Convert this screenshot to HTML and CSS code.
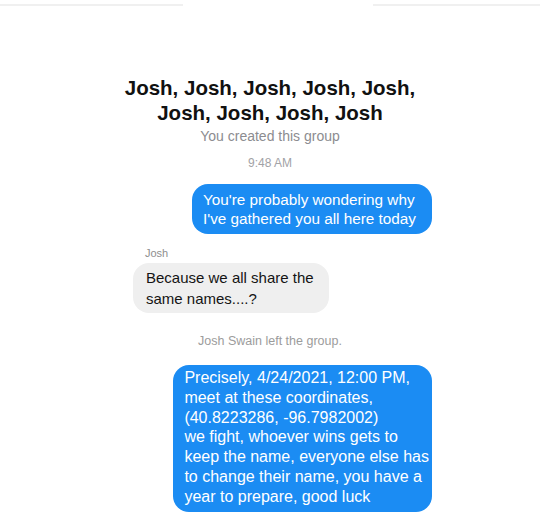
FILE: index.html
```html
<!DOCTYPE html>
<html>
<head>
<meta charset="utf-8">
<link rel="stylesheet" href="styles.css">
</head>
<body>
<div class="screen">
  <div class="topbar"><span class="rule left"></span><span class="gap"></span><span class="rule"></span></div>
  <h1 class="title">Josh, Josh, Josh, Josh, Josh,<br>Josh, Josh, Josh, Josh</h1>
  <div class="sub">You created this group</div>
  <div class="time">9:48 AM</div>
  <div class="row out r1"><div class="bubble blue b1">You're probably wondering why<br>I've gathered you all here today</div></div>
  <div class="sender">Josh</div>
  <div class="row in"><div class="bubble gray">Because we all share the<br>same names....?</div></div>
  <div class="event">Josh Swain left the group.</div>
  <div class="row out r3"><div class="bubble blue b3">Precisely, 4/24/2021, 12:00 PM,<br>meet at these coordinates,<br>(40.8223286, -96.7982002)<br>we fight, whoever wins gets to<br>keep the name, everyone else has<br>to change their name, you have a<br>year to prepare, good luck</div></div>
</div>
</body>
</html>
```
FILE: styles.css
```css
html, body {
  margin: 0;
  padding: 0;
  background: #ffffff;
}
.screen {
  width: 540px;
  height: 522px;
  overflow: hidden;
  font-family: "Liberation Sans", Arial, sans-serif;
  display: flex;
  flex-direction: column;
}
.topbar {
  display: flex;
  margin-top: 4px;
  height: 2px;
}
.rule {
  flex: 1;
  background: #f0f0f0;
}
.rule.left {
  flex: 0 0 183px;
}
.gap {
  width: 190px;
}
.title {
  margin: 69px 0 0;
  text-align: center;
  font-size: 20.5px;
  line-height: 25px;
  font-weight: bold;
  color: #111111;
}
.sub {
  margin-top: 3px;
  text-align: center;
  font-size: 14px;
  line-height: 17px;
  color: #8c8c90;
}
.time {
  margin-top: 11px;
  text-align: center;
  font-size: 12px;
  line-height: 15px;
  color: #a2a2a6;
}
.row {
  display: flex;
}
.out {
  justify-content: flex-end;
  padding-right: 108px;
}
.in {
  padding-left: 133px;
  margin-top: 3px;
}
.r1 {
  margin-top: 13px;
}
.r3 {
  margin-top: 16px;
}
.bubble {
  white-space: nowrap;
  border-radius: 16px;
}
.blue {
  background: #1b8cf3;
  color: #ffffff;
}
.b1 {
  font-size: 15.3px;
  line-height: 19px;
  padding: 6px 16px 6px 11px;
}
.b3 {
  font-size: 16px;
  line-height: 19.8px;
  padding: 3px 3px 5px 11px;
}
.gray {
  background: #efefef;
  color: #141414;
  font-size: 15px;
  line-height: 21px;
  padding: 4px 15px 4px 13px;
}
.sender {
  margin-top: 13px;
  padding-left: 145px;
  font-size: 11px;
  line-height: 13px;
  color: #8e8e8e;
}
.event {
  margin-top: 20px;
  text-align: center;
  font-size: 12.5px;
  line-height: 16px;
  color: #9c9c9c;
}
```
